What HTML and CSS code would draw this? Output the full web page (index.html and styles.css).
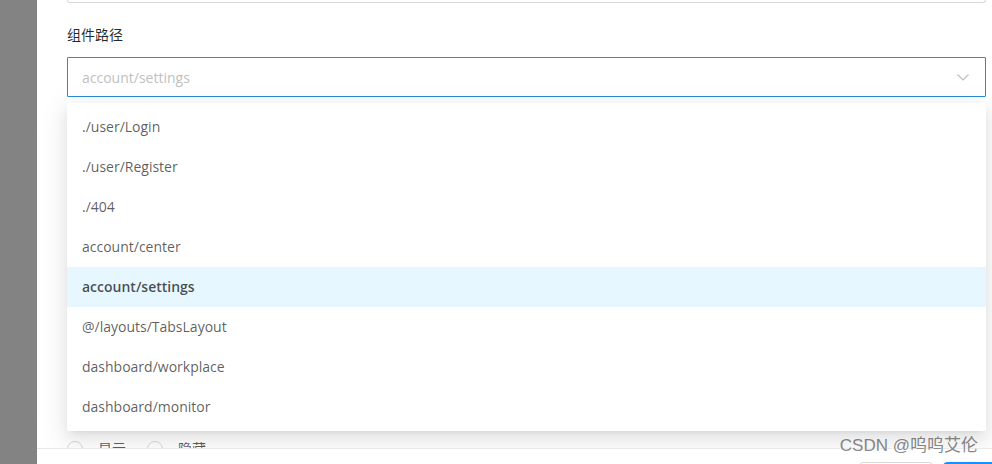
FILE: index.html
```html
<!DOCTYPE html>
<html>
<head lang="zh">
    <meta charset="UTF-8">
    <title>编辑菜单</title>
    <link rel="stylesheet" href="styles.css">
</head>
<body>
<div class="page">
    <div class="mask"></div>
    <div class="drawer">
        <div class="drawer-body">
            <div class="prev-input"></div>

            <div class="form-item">
                <div class="form-label">组件路径</div>
                <div class="select">
                    <span class="select-placeholder">account/settings</span>
                    <svg class="select-arrow" width="14" height="14" viewBox="0 0 14 14">
                        <path d="M1.5 4.5 L7 10 L12.5 4.5" fill="none" stroke="#bfbfbf" stroke-width="1.2"/>
                    </svg>
                </div>
                <ul class="dropdown">
                    <li>./user/Login</li>
                    <li>./user/Register</li>
                    <li>./404</li>
                    <li>account/center</li>
                    <li class="selected">account/settings</li>
                    <li>@/layouts/TabsLayout</li>
                    <li>dashboard/workplace</li>
                    <li>dashboard/monitor</li>
                </ul>
            </div>

            <!-- 下面几项被下拉框挡住，只露出单选 -->
            <div class="form-item form-radio">
                <div class="radio-group">
                    <label class="radio"><span class="radio-dot"></span>显示</label>
                    <label class="radio"><span class="radio-dot"></span>隐藏</label>
                </div>
            </div>
        </div>
        <div class="drawer-footer">
            <button class="btn">取消</button>
            <button class="btn btn-primary">确定</button>
        </div>
    </div>
    <div class="watermark">CSDN @呜呜艾伦</div>
</div>
</body>
</html>
```

FILE: styles.css
```css
*{
    margin: 0;
    padding: 0;
    box-sizing: border-box;
}
html,body{
    width: 100%;
    height: 100%;
    overflow: hidden;
    background: #fff;
}
body{
    font-family: "Open Sans", "Noto Sans CJK SC", sans-serif;
    font-size: 14px;
    color: rgba(0,0,0,.65);
}
.page{
    display: flex;
    height: 100%;
    position: relative;
}
.mask{
    width: 37px;
    flex-shrink: 0;
    background: #838383;
}
.drawer{
    width: 1002px;
    flex-shrink: 0;
    display: flex;
    flex-direction: column;
    height: 100%;
    background: #fff;
}
.drawer-body{
    height: 448px;
    flex-shrink: 0;
    padding: 0 53px 0 30px;
    overflow: hidden;
}
.prev-input{
    height: 3px;
    border: 1px solid #d9d9d9;
    border-top: none;
    border-radius: 0 0 4px 4px;
    margin-bottom: 21px;
}
.form-item{
    position: relative;
    margin-bottom: 24px;
}
.form-label{
    line-height: 22px;
    color: rgba(0,0,0,.85);
    margin-bottom: 11px;
}
.select{
    height: 40px;
    border: 1px solid #2a8ad4;
    border-radius: 1px;
    display: flex;
    align-items: center;
    justify-content: space-between;
    padding: 0 14px;
    background: #fff;
}
.select-placeholder{
    color: #bfbfbf;
}
.select-arrow{
    margin-right: 1px;
}
.dropdown{
    position: absolute;
    left: 0;
    right: 0;
    top: 79px;
    z-index: 10;
    list-style: none;
    background: #fff;
    padding: 4px 0;
    border-radius: 2px;
    box-shadow: 0 3px 6px -4px rgba(0,0,0,.12), 0 6px 16px 0 rgba(0,0,0,.08), 0 9px 28px 8px rgba(0,0,0,.05);
}
.dropdown li{
    height: 40px;
    line-height: 40px;
    padding: 0 15px;
    color: rgba(0,0,0,.65);
}
.dropdown li.selected{
    background: #e6f7ff;
    font-weight: 600;
    color: rgba(0,0,0,.7);
}
.form-radio{
    margin-top: 341px;
}
.radio-group{
    display: flex;
    gap: 21px;
}
.radio{
    display: flex;
    align-items: center;
    gap: 15px;
    line-height: 22px;
    color: rgba(0,0,0,.65);
}
.radio-dot{
    width: 16px;
    height: 16px;
    border: 1px solid #d9d9d9;
    border-radius: 50%;
}
.drawer-footer{
    flex: 1;
    min-height: 0;
    overflow: hidden;
    border-top: 1px solid #e8e8e8;
    display: flex;
    justify-content: flex-end;
    align-items: flex-start;
    gap: 10px;
    padding: 13px 16px 0;
    background: #fff;
}
.btn{
    width: 74px;
    height: 32px;
    flex-shrink: 0;
    border: 1px solid #d9d9d9;
    border-radius: 4px;
    background: #fff;
    font: inherit;
    line-height: 30px;
    color: rgba(0,0,0,.65);
}
.btn-primary{
    width: 80px;
    background: #1890ff;
    border-color: #1890ff;
    color: #fff;
}
.watermark{
    position: absolute;
    right: 14px;
    bottom: 8px;
    font-family: "Liberation Sans", "Noto Sans CJK SC", sans-serif;
    font-size: 17px;
    color: #8a8a8a;
    text-shadow: 0 0 2px #fff, 0 0 2px #fff;
}
```
